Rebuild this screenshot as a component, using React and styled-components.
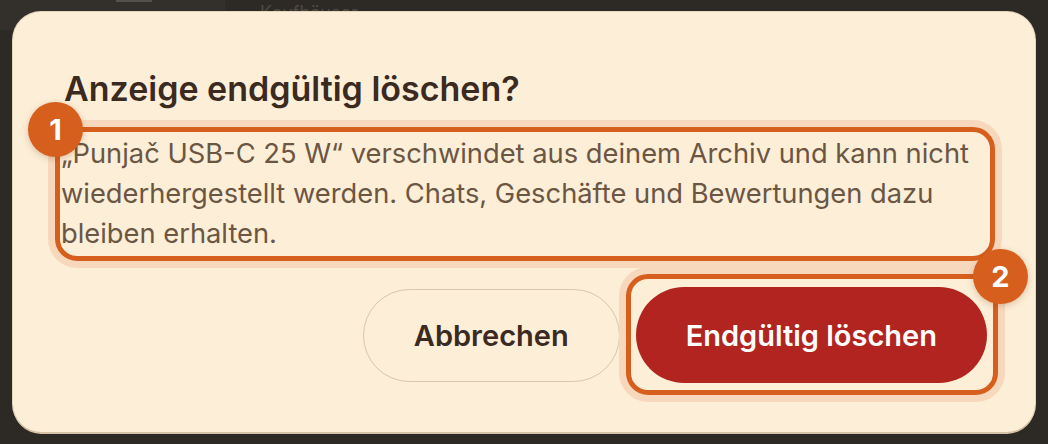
import React from 'react';
import styled, { createGlobalStyle } from 'styled-components';

const Global = createGlobalStyle`
  html, body {
    margin: 0;
    padding: 0;
    background: #2d2a26;
  }
  body {
    font-family: Inter, "Noto Sans", "Liberation Sans", sans-serif;
    width: 1048px;
    height: 444px;
    overflow: hidden;
  }
`;

const Screen = styled.div`
  position: relative;
  width: 1048px;
  height: 444px;
  background: #2d2a26;
  padding: 12px 13px;
  box-sizing: border-box;
`;

const Backdrop = styled.div`
  position: absolute;
  top: 0;
  left: 0;
  right: 0;
  height: 30px;
  display: flex;
  overflow: hidden;
`;

const BackdropSide = styled.div`
  width: 225px;
  background: #33302c;
  position: relative;
  &::after {
    content: '';
    position: absolute;
    left: 116px;
    top: 0;
    width: 36px;
    height: 2px;
    background: #55514b;
  }
`;

const BackdropText = styled.div`
  margin-left: 35px;
  margin-top: 4px;
  font-size: 18px;
  line-height: 18px;
  color: #4e4a44;
`;

const Dialog = styled.div`
  position: relative;
  z-index: 1;
  background: #fdeed7;
  border-radius: 28px;
  height: 420px;
  box-sizing: border-box;
  padding: 57px 48px 50px 48px;
  box-shadow: 0 2px 0 #d6c2a6, 0 0 0 1px #e6d5bd;
  display: flex;
  flex-direction: column;
`;

const Title = styled.h2`
  margin: 0 0 0 3px;
  font-size: 34px;
  line-height: 40px;
  font-weight: 600;
  color: #3a2a1f;
`;

const Marked = styled.div`
  position: relative;
`;

const Ring = styled.div`
  position: absolute;
  inset: ${p => p.$inset};
  border: 5px solid #d65f1d;
  border-radius: ${p => p.$radius}px;
  box-shadow: 0 0 0 7px #f8d8bd;
  pointer-events: none;
`;

const Badge = styled.div`
  position: absolute;
  width: 55px;
  height: 55px;
  border-radius: 50%;
  background: #d65f1d;
  color: #fff;
  font-size: 29px;
  font-weight: 700;
  display: flex;
  align-items: center;
  justify-content: center;
  box-shadow: 0 2px 6px rgba(120, 60, 20, 0.25);
  top: ${p => p.$top}px;
  left: ${p => (p.$left !== undefined ? `${p.$left}px` : 'auto')};
  right: ${p => (p.$right !== undefined ? `${p.$right}px` : 'auto')};
`;

const Body = styled.p`
  margin: 25px 0 0 0;
  padding: 0;
  font-size: 27.3px;
  line-height: 40px;
  color: #6b5644;
  width: 928px;
  position: relative;
`;

const Actions = styled.div`
  display: flex;
  justify-content: flex-end;
  align-items: center;
  gap: 16px;
  margin-top: 33px;
`;

const Button = styled.button`
  height: ${p => (p.$danger ? 96 : 93)}px;
  padding: 0 50px;
  border-radius: 999px;
  font-family: inherit;
  font-size: 29px;
  font-weight: 600;
  cursor: pointer;
  border: ${p => (p.$danger ? 'none' : '1.5px solid #d9c6ab')};
  background: ${p => (p.$danger ? '#b1241f' : 'transparent')};
  color: ${p => (p.$danger ? '#fff' : '#3a2a1f')};
  display: block;
`;

export default function App() {
  return (
    <>
      <Global />
      <Screen>
        <Backdrop>
          <BackdropSide />
          <BackdropText>Kaufhäuser</BackdropText>
        </Backdrop>
        <Dialog>
          <Title>Anzeige endgültig löschen?</Title>
          <Body>
            „Punjač USB-C 25 W“ verschwindet aus deinem Archiv und kann nicht
            wiederhergestellt werden. Chats, Geschäfte und Bewertungen dazu
            bleiben erhalten.
            <Ring $inset="-7px -6px -7px -6px" $radius={22} />
            <Badge $top={-32} $left={-33}>1</Badge>
          </Body>
          <Actions>
            <Button>Abbrechen</Button>
            <Marked>
              <Button $danger>Endgültig löschen</Button>
              <Ring $inset="-13px -11px -12px -10px" $radius={22} />
              <Badge $top={-38} $right={-41}>2</Badge>
            </Marked>
          </Actions>
        </Dialog>
      </Screen>
    </>
  );
}
